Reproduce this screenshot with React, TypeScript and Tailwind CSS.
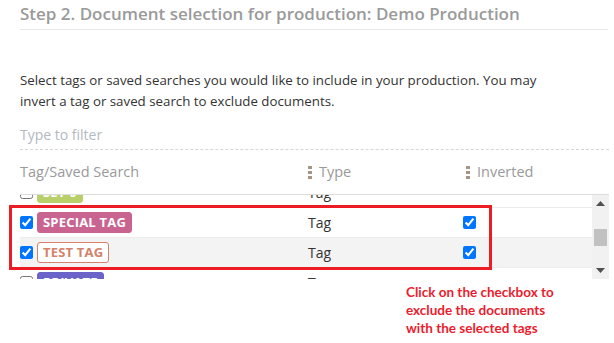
import React from "react";

const Grip = () => (
  <span className="inline-flex flex-col gap-[2px] mr-[7px]">
    <span className="block w-[4px] h-[3px] bg-[#a89484]" />
    <span className="block w-[4px] h-[3px] bg-[#a89484]" />
    <span className="block w-[4px] h-[3px] bg-[#a89484]" />
  </span>
);

type Row = {
  name: string;
  badge: string;
  checked: boolean;
  inverted: boolean;
  bg: string;
};

const rows: Row[] = [
  { name: "SET 0", badge: "bg-[#b9cf6a] text-white border-[#b9cf6a]", checked: false, inverted: false, bg: "bg-white" },
  { name: "SPECIAL TAG", badge: "bg-[#c9638f] text-white border-[#c9638f]", checked: true, inverted: true, bg: "bg-white" },
  { name: "TEST TAG", badge: "bg-white text-[#d4826a] border-[#d4826a]", checked: true, inverted: true, bg: "bg-[#f3f3f3]" },
  { name: "PRIVATE", badge: "bg-[#6c63c9] text-white border-[#6c63c9]", checked: false, inverted: false, bg: "bg-white" },
];

export default function App() {
  return (
    <div
      className="relative w-[614px] h-[343px] bg-white overflow-hidden pl-[20px] pr-[5px]"
      style={{ fontFamily: '"Open Sans", "Noto Sans", sans-serif' }}
    >
      <div className="h-[30px] pt-[2px] border-b border-[#e8e8e8] text-[17px] font-semibold text-[#9a9a9a] leading-[24px] mr-[1px]">
        Step 2. Document selection for production: Demo Production
      </div>
      <p className="mt-[40px] text-[13.3px] leading-[21px] text-[#333] whitespace-nowrap">
        Select tags or saved searches you would like to include in your production. You may
        <br />
        invert a tag or saved search to exclude documents.
      </p>
      <div className="mt-[8px] h-[30px] border-b border-dashed border-[#d6d6d6] flex items-center text-[14px] text-[#b3b9c2]">
        Type to filter
      </div>
      <div className="h-[45px] border-b border-[#dcdcdc] flex items-center text-[14.5px] text-[#9a9a9a]">
        <div className="w-[288px]">Tag/Saved Search</div>
        <div className="w-[155px] flex items-center">
          <Grip />
          Type
        </div>
        <div className="flex items-center pl-[3px]">
          <Grip />
          Inverted
        </div>
      </div>
      <div className="flex h-[84px]">
        <div className="flex-1 overflow-hidden">
          <div className="-mt-[17px]">
            {rows.map((r) => (
              <div
                key={r.name}
                className={`h-[30px] flex items-center border-b border-[#ececec] text-[14px] text-[#333] ${r.bg}`}
              >
                <div className="w-[288px] flex items-center gap-[4px]">
                  <input type="checkbox" defaultChecked={r.checked} className="w-[13px] h-[13px] m-0" />
                  <span
                    className={`h-[21px] px-[5px] rounded-[3px] border flex items-center text-[13px] font-bold tracking-[0.2px] ${r.badge}`}
                  >
                    {r.name}
                  </span>
                </div>
                <div className="w-[155px]">Tag</div>
                <div className="flex items-center">
                  {r.inverted ? (
                    <input type="checkbox" defaultChecked className="w-[13px] h-[13px] m-0" />
                  ) : null}
                </div>
              </div>
            ))}
          </div>
        </div>
        <div className="w-[17px] bg-[#f1f1f1] flex flex-col items-center justify-between py-[6px]">
          <svg width="9" height="5" viewBox="0 0 9 5">
            <path d="M0 5 L4.5 0 L9 5 Z" fill="#505050" />
          </svg>
          <div className="w-[13px] h-[17px] bg-[#c1c1c1]" />
          <svg width="9" height="5" viewBox="0 0 9 5">
            <path d="M0 0 L4.5 5 L9 0 Z" fill="#505050" />
          </svg>
        </div>
      </div>

      <div className="absolute left-[9px] top-[205px] w-[483px] h-[65px] border-[3px] border-[#ec1c24]" />

      <div
        className="absolute left-[406px] top-[283px] text-[13.5px] leading-[18px] font-bold text-[#ec1c2e]"
        style={{ fontFamily: "Lato, sans-serif" }}
      >
        Click on the checkbox to
        <br />
        exclude the documents
        <br />
        with the selected tags
      </div>
    </div>
  );
}
